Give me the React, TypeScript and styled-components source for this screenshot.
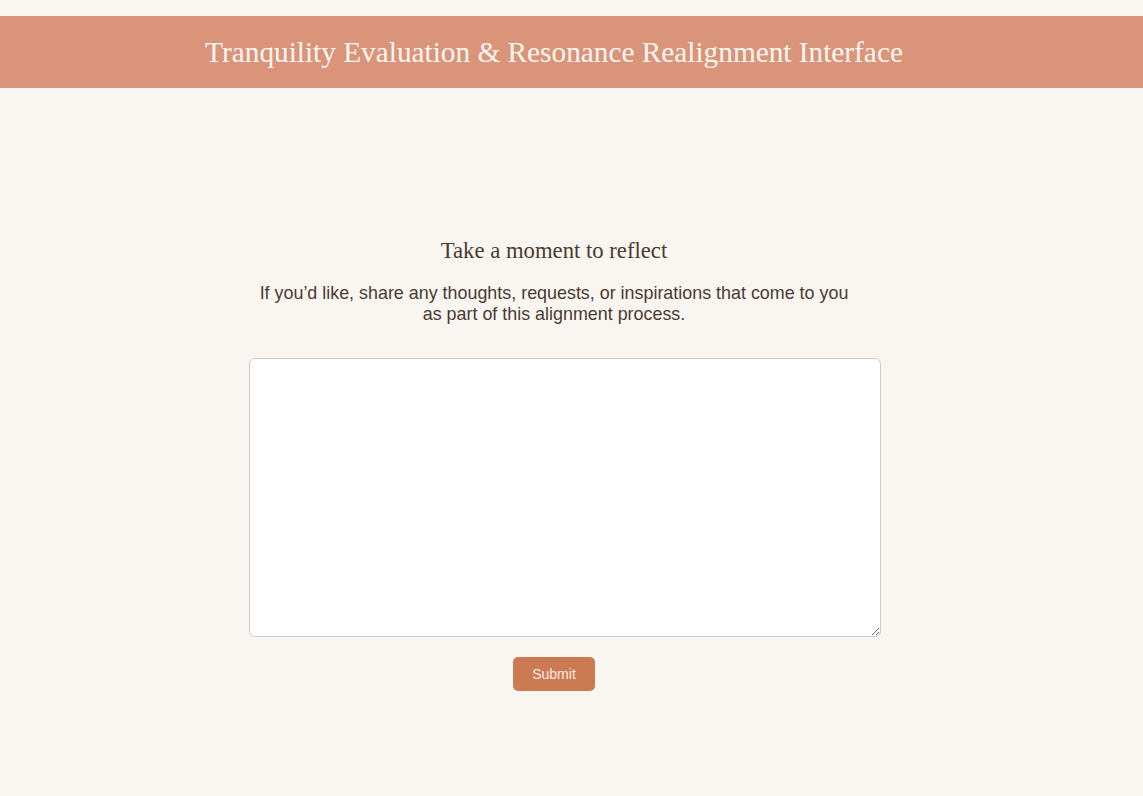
import React, { useState } from 'react'
import styled, { createGlobalStyle } from 'styled-components'

const GlobalStyle = createGlobalStyle`
  html, body {
    margin: 0;
    padding: 0;
    background: #f9f6f2;
  }

  body {
    font-family: 'Liberation Sans', Arial, sans-serif;
    color: #4a3a31;
  }
`

const Page = styled.div`
  min-height: 100vh;
  padding-top: 16px;
  box-sizing: border-box;
`

const Header = styled.header`
  background-color: #d9947a;
  height: 72px;
  display: flex;
  align-items: center;
  justify-content: center;
  padding-right: 35px;
`

const Title = styled.h1`
  font-family: 'Liberation Serif', 'Times New Roman', serif;
  font-weight: 400;
  font-size: 29.3px;
  color: #fdf6f0;
  margin: 0;
`

const Main = styled.main`
  display: flex;
  flex-direction: column;
  align-items: center;
  padding: 150px 35px 0 0;
`

const Section = styled.section`
  width: 610px;
  display: flex;
  flex-direction: column;
  align-items: center;
`

const Heading = styled.h2`
  font-family: 'Liberation Serif', 'Times New Roman', serif;
  font-weight: 400;
  font-size: 22.7px;
  color: #4a3a31;
  margin: 0 0 19px;
`

const Lead = styled.p`
  font-size: 17.9px;
  line-height: 21px;
  text-align: center;
  margin: 0 0 33px;
  max-width: 600px;
`

const Reflection = styled.textarea`
  align-self: flex-start;
  width: 100%;
  height: 257px;
  padding: 10px;
  border: 1px solid #cccccc;
  border-radius: 6px;
  background: #ffffff;
  font-family: 'Liberation Sans', Arial, sans-serif;
  font-size: 15px;
  color: #4a3a31;
  outline: none;
`

const SubmitButton = styled.button`
  margin-top: 20px;
  width: 82px;
  height: 34px;
  border: none;
  border-radius: 5px;
  background-color: #cc7a52;
  color: #fbeee6;
  font-family: 'Liberation Sans', Arial, sans-serif;
  font-size: 14px;
  cursor: pointer;
`

const App = () => {
  const [text, setText] = useState('')

  return (
    <>
      <GlobalStyle />
      <Page>
        <Header>
          <Title>Tranquility Evaluation &amp; Resonance Realignment Interface</Title>
        </Header>
        <Main>
          <Section>
            <Heading>Take a moment to reflect</Heading>
            <Lead>
              If you’d like, share any thoughts, requests, or inspirations that come to you as part of
              this alignment process.
            </Lead>
            <Reflection value={text} onChange={(e) => setText(e.target.value)} />
            <SubmitButton type="button">Submit</SubmitButton>
          </Section>
        </Main>
      </Page>
    </>
  )
}

export default App
